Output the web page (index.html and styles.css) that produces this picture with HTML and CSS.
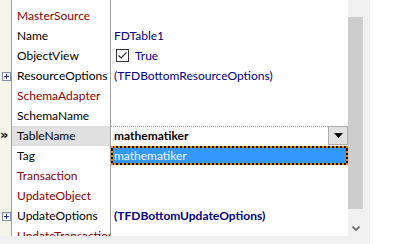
FILE: index.html
```html
<!DOCTYPE html>
<html>
<head>
<meta charset="utf-8">
<link rel="stylesheet" href="styles.css">
</head>
<body>
<div class="window">
  <div class="main">
    <div class="grid">
      <div class="row partial"><div class="gutter"></div><div class="name"></div><div class="value"></div></div>
      <div class="row"><div class="gutter"></div><div class="name ref">MasterSource</div><div class="value"></div></div>
      <div class="row"><div class="gutter"></div><div class="name">Name</div><div class="value">FDTable1</div></div>
      <div class="row"><div class="gutter"></div><div class="name">ObjectView</div><div class="value"><span class="check"><svg width="13" height="13" viewBox="0 0 13 13"><rect x="0.5" y="0.5" width="12" height="12" fill="#fff" stroke="#333"/><path d="M2.5 6.5 L5 9 L10.5 3.5" fill="none" stroke="#333" stroke-width="1.2"/></svg></span>True</div></div>
      <div class="row"><div class="gutter"><span class="plus"></span></div><div class="name">ResourceOptions</div><div class="value">(TFDBottomResourceOptions)</div></div>
      <div class="row"><div class="gutter"></div><div class="name ref">SchemaAdapter</div><div class="value"></div></div>
      <div class="row"><div class="gutter"></div><div class="name">SchemaName</div><div class="value"></div></div>
      <div class="row selected"><div class="gutter"><span class="marker">»</span></div><div class="name">TableName</div>
        <div class="value edit"><span class="edit-text">mathematiker</span><span class="dd-btn"><svg width="9" height="5" viewBox="0 0 9 5"><path d="M0 0 H9 L4.5 5 Z" fill="#000"/></svg></span>
          <div class="dropdown"><div class="dd-item">mathematiker</div></div>
        </div>
      </div>
      <div class="row"><div class="gutter"></div><div class="name">Tag</div><div class="value"></div></div>
      <div class="row"><div class="gutter"></div><div class="name ref">Transaction</div><div class="value"></div></div>
      <div class="row"><div class="gutter"></div><div class="name ref">UpdateObject</div><div class="value"></div></div>
      <div class="row"><div class="gutter"><span class="plus"></span></div><div class="name">UpdateOptions</div><div class="value bold">(TFDBottomUpdateOptions)</div></div>
      <div class="row"><div class="gutter"></div><div class="name ref">UpdateTransaction</div><div class="value"></div></div>
    </div>
    <div class="scrollbar">
      <div class="thumb"></div>
      <div class="arrow"><svg width="8" height="6" viewBox="0 0 8 6"><path d="M0.5 0.5 L4 4 L7.5 0.5" fill="none" stroke="#606060" stroke-width="1.6"/></svg></div>
    </div>
  </div>
  <div class="status">Bold: Editor weicht vom Standardwert ab. Fett: Eigenschaft geändert</div>
</div>
</body>
</html>
```

FILE: styles.css
```css
html, body {
  margin: 0;
  padding: 0;
  background: #ffffff;
}
body {
  width: 407px;
  height: 244px;
  overflow: hidden;
  font-family: Lato, "Liberation Sans", Arial, sans-serif;
  font-size: 12px;
}
.window {
  width: 370px;
  height: 244px;
  display: flex;
  flex-direction: column;
}
.main {
  display: flex;
  height: 236px;
  overflow: hidden;
}
.grid {
  width: 348px;
  height: 236px;
  overflow: hidden;
  display: flex;
  flex-direction: column;
  background: #fff;
}
.row {
  display: flex;
  height: 20px;
  flex: none;
  line-height: 20px;
  position: relative;
}
.row.partial {
  height: 6px;
}
.gutter {
  width: 12px;
  flex: none;
  background: #f6f5ea;
  border-right: 1px solid #a0a0a0;
  box-sizing: border-box;
  position: relative;
}
.name {
  width: 99px;
  flex: none;
  padding-left: 5px;
  box-sizing: border-box;
  color: #000;
  border-right: 1px solid #a0a0a0;
  white-space: nowrap;
  overflow: hidden;
}
.name.ref {
  color: #8b0000;
}
.value {
  flex: 1;
  padding-left: 3px;
  color: #000080;
  white-space: nowrap;
  position: relative;
}
.value.bold {
  font-weight: bold;
}
.check {
  display: inline-block;
  vertical-align: middle;
  margin: -3px 6px 0 2px;
  height: 13px;
}
.check svg {
  display: block;
}
.plus {
  position: absolute;
  left: 2px;
  top: 6px;
  width: 7px;
  height: 7px;
  border: 1px solid #7f8fb0;
  background: #fff;
}
.plus::before, .plus::after {
  content: "";
  position: absolute;
  background: #30308a;
}
.plus::before {
  left: 1px;
  top: 3px;
  width: 5px;
  height: 1px;
}
.plus::after {
  left: 3px;
  top: 1px;
  width: 1px;
  height: 5px;
}
.marker {
  position: absolute;
  left: 0;
  top: -1px;
  font-family: "DejaVu Sans", sans-serif;
  font-size: 13px;
  font-weight: bold;
  color: #000;
  line-height: 20px;
}
.selected .name {
  background: #e0e0e0;
}
.value.edit {
  display: flex;
  padding-left: 0;
  border-top: 1px dotted #a0a0a0;
  box-sizing: border-box;
  color: #000;
  font-weight: bold;
  line-height: 18px;
}
.edit-text {
  flex: 1;
  padding-left: 3px;
}
.dd-btn {
  width: 20px;
  height: 19px;
  box-sizing: border-box;
  border: 1px solid #adadad;
  background: #e1e1e1;
  margin-top: -1px;
  display: flex;
  align-items: center;
  justify-content: center;
}
.dd-btn svg {
  display: block;
}
.dropdown {
  position: absolute;
  left: 0;
  right: 0;
  top: 19px;
  height: 19px;
  box-sizing: border-box;
  background: #000;
  border: 2px dotted #f08000;
  z-index: 2;
}
.dd-item {
  height: 15px;
  background: #3399ff;
  color: #f0f8ff;
  font-weight: normal;
  line-height: 15px;
  padding-left: 1px;
}
.scrollbar {
  width: 22px;
  height: 236px;
  background: #f0f0f0;
  position: relative;
  flex: none;
}
.thumb {
  position: absolute;
  left: 0;
  top: 17px;
  width: 15px;
  height: 192px;
  background: #cdcdcd;
}
.arrow {
  position: absolute;
  left: 4px;
  top: 226px;
}
.arrow svg {
  display: block;
}
.status {
  height: 8px;
  background: #f0f0f0;
  overflow: hidden;
  line-height: 14px;
  padding-left: 2px;
  padding-top: 6px;
  box-sizing: border-box;
  font-size: 12px;
  color: #000;
  white-space: nowrap;
}
```
